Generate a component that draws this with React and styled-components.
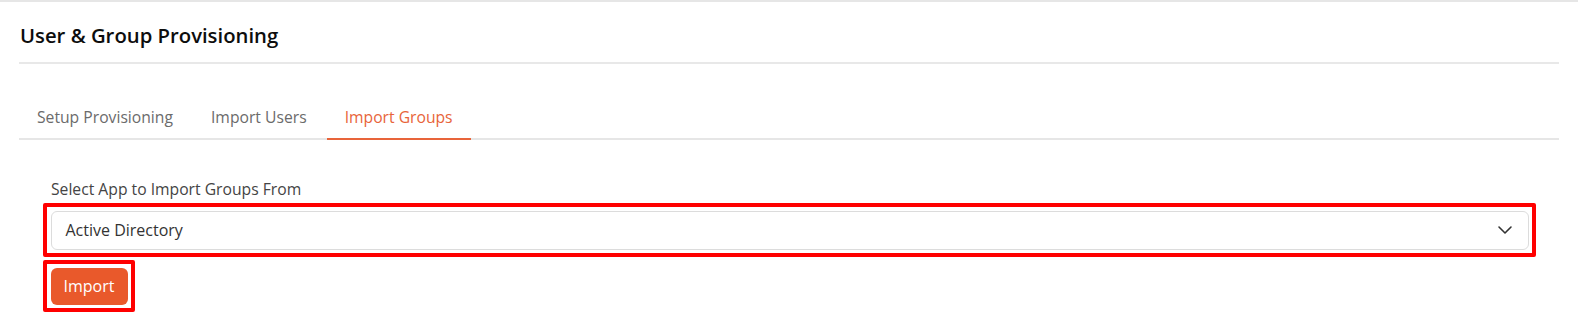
import React, { useState } from 'react'
import styled, { createGlobalStyle } from 'styled-components'
import { ChevronDown } from 'lucide-react'

const GlobalStyle = createGlobalStyle`
    html, body {
        margin: 0;
        padding: 0;
        background: #fff;
    }
    body {
        font-family: "Open Sans", "Liberation Sans", sans-serif;
        color: #222;
    }
`

const tabs = ['Setup Provisioning', 'Import Users', 'Import Groups']

function App() {
    const [active, setActive] = useState(2)

    return (
        <>
            <GlobalStyle />
            <Page>
                <Header>
                    <Title>User &amp; Group Provisioning</Title>
                </Header>
                <TabBar>
                    {tabs.map((t, i) => (
                        <Tab key={t} $active={i === active} onClick={() => setActive(i)}>
                            {t}
                        </Tab>
                    ))}
                </TabBar>
                <Form>
                    <Label>Select App to Import Groups From</Label>
                    <Highlight>
                        <SelectBox>
                            <span>Active Directory</span>
                            <ChevronDown size={24} strokeWidth={1.6} />
                        </SelectBox>
                    </Highlight>
                    <Highlight $inline>
                        <ImportButton>Import</ImportButton>
                    </Highlight>
                </Form>
            </Page>
        </>
    )
}

export default App

const Page = styled.div`
    border-top: 2px solid #e6e6e6;
    padding: 0 19px;
`

const Header = styled.div`
    height: 60px;
    display: flex;
    align-items: center;
    border-bottom: 2px solid #e8e8e8;
`

const Title = styled.h2`
    margin: 0;
    padding-left: 1px;
    padding-top: 5px;
    font-size: 20.3px;
    font-weight: 600;
    color: #0d0d0d;
`

const TabBar = styled.div`
    display: flex;
    gap: 2px;
    margin-top: 32px;
    border-bottom: 2px solid #e6e6e6;
`

const Tab = styled.div`
    height: 42px;
    line-height: 42px;
    padding: 0 18px;
    font-size: 15.7px;
    color: ${p => (p.$active ? '#e8643a' : '#6b6b6b')};
    border-bottom: 2px solid ${p => (p.$active ? '#e8643a' : 'transparent')};
    margin-bottom: -2px;
    cursor: pointer;
`

const Form = styled.div`
    padding: 39px 23px 0 24px;
    display: flex;
    flex-direction: column;
    align-items: flex-start;
`

const Label = styled.div`
    margin-left: 8px;
    font-size: 15.7px;
    color: #444;
    line-height: 21px;
`

const Highlight = styled.div`
    align-self: ${p => (p.$inline ? 'flex-start' : 'stretch')};
    border: 4px solid #ff0000;
    border-radius: 2px;
    padding: 3.5px;
    margin-top: 3px;
`

const SelectBox = styled.div`
    height: 37px;
    border: 1px solid #dcdcdc;
    border-radius: 6px;
    display: flex;
    align-items: center;
    justify-content: space-between;
    padding: 0 11px 0 14px;
    font-size: 16px;
    color: #333;

    > svg {
        color: #333;
    }
`

const ImportButton = styled.button`
    display: block;
    width: 77px;
    height: 37px;
    border: none;
    border-radius: 6px;
    background: #e9592b;
    color: #fff;
    font-family: inherit;
    font-size: 16px;
    font-weight: 500;
    cursor: pointer;
`
